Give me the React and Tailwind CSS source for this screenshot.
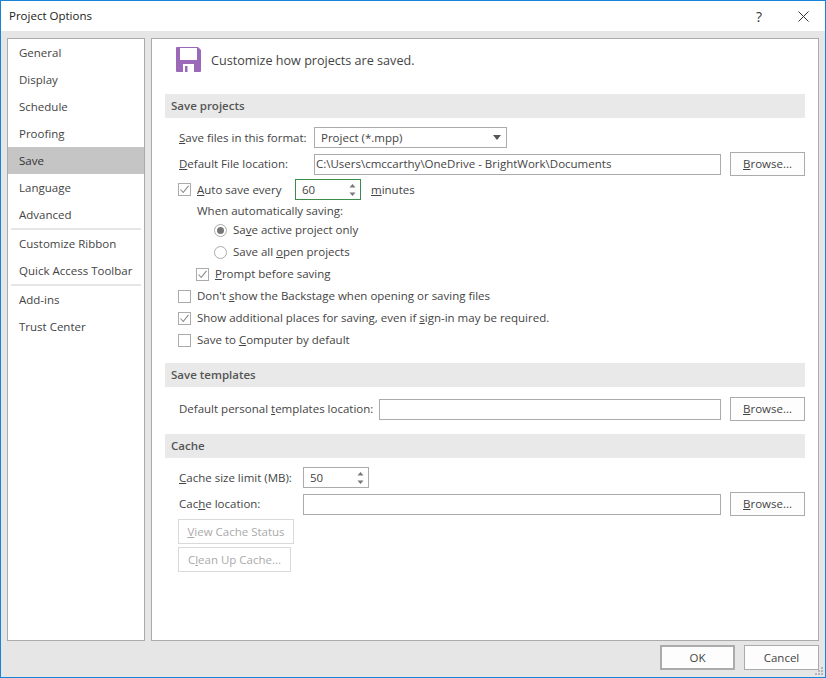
const font = { fontFamily: '"Open Sans", "Noto Sans", sans-serif' }

const navGroups = [
  ['General', 'Display', 'Schedule', 'Proofing', 'Save', 'Language', 'Advanced'],
  ['Customize Ribbon', 'Quick Access Toolbar'],
  ['Add-ins', 'Trust Center'],
]

function Check({ checked }) {
  return (
    <span className="flex h-[13px] w-[13px] shrink-0 items-center justify-center border border-[#ababab] bg-white">
      {checked && (
        <svg width="11" height="11" viewBox="0 0 11 11" fill="none">
          <path d="M1.5 5.5 L4.2 8.5 L9.5 1.8" stroke="#8a8a8a" strokeWidth="1.1" />
        </svg>
      )}
    </span>
  )
}

function Radio({ checked }) {
  return (
    <span className="flex h-[13px] w-[13px] shrink-0 items-center justify-center rounded-full border border-[#ababab] bg-white">
      {checked && <span className="h-[7px] w-[7px] rounded-full bg-[#777777]" />}
    </span>
  )
}

function Spinner({ value, className }) {
  return (
    <div className={`flex h-[21px] items-center justify-between border pl-[6px] pr-[4px] ${className}`}>
      <span>{value}</span>
      <svg width="7" height="14" viewBox="0 0 7 14" fill="#777777">
        <path d="M3.5 1 L6.5 4.5 L0.5 4.5 Z" />
        <path d="M3.5 13 L6.5 9.5 L0.5 9.5 Z" />
      </svg>
    </div>
  )
}

function Browse() {
  return (
    <button className="ml-[9px] h-[24px] w-[75px] shrink-0 border border-[#ababab] bg-[#fdfdfd] text-[#444444]">
      <u>B</u>rowse...
    </button>
  )
}

function SectionHead({ children, className = '' }) {
  return (
    <div className={`flex h-[24px] items-center bg-[#e9e9e9] pb-px pl-[6px] font-semibold text-[#555555] ${className}`}>
      {children}
    </div>
  )
}

function OptionRow({ indent = 'pl-0', children }) {
  return <div className={`flex h-[22px] items-center gap-[6px] ${indent}`}>{children}</div>
}

function FloppyIcon() {
  return (
    <svg width="25" height="25" viewBox="0 0 25 25">
      <path d="M1 0 H22 L25 3 V24 Q25 25 24 25 H1 Q0 25 0 24 V1 Q0 0 1 0 Z" fill="#9b69b7" />
      <rect x="4" y="1" width="17" height="12" fill="#ffffff" />
      <rect x="7" y="17" width="11" height="8" fill="#ffffff" />
      <rect x="9" y="19" width="2.5" height="6" fill="#9b69b7" />
    </svg>
  )
}

export default function App() {
  return (
    <div
      style={font}
      className="flex h-[678px] w-[826px] flex-col border border-[#1883d7] bg-[#e6e6e6] text-[11.5px] text-[#444444]"
    >
      <div className="flex h-[30px] shrink-0 items-center justify-between bg-white pl-[8px]">
        <span className="text-[#222222]">Project Options</span>
        <div className="flex items-center">
          <span className="w-[46px] text-center text-[14px] text-[#333333]">?</span>
          <svg className="mx-[16px]" width="11" height="11" viewBox="0 0 11 11" stroke="#333333" fill="none">
            <path d="M0.5 0.5 L10.5 10.5 M10.5 0.5 L0.5 10.5" />
          </svg>
        </div>
      </div>

      <div className="flex h-[610px] shrink-0 gap-[6px] px-[6px] pt-[7px]">
        <nav className="w-[138px] shrink-0 border border-[#ababab] bg-white">
          {navGroups.map((group, i) => (
            <div key={group[0]} className={i > 0 ? 'mx-[3px] border-t-2 border-[#e6e6e6]' : ''}>
              {group.map((item) => (
                <div
                  key={item}
                  className={`flex h-[27px] items-center pt-px ${i > 0 ? 'pl-[8px]' : 'pl-[11px]'} ${
                    item === 'Save' ? 'bg-[#c5c5c5] text-[#333333]' : ''
                  }`}
                >
                  {item}
                </div>
              ))}
            </div>
          ))}
        </nav>

        <main className="flex-1 border border-[#ababab] bg-white px-[13px]">
          <div className="flex h-[55px] items-start gap-[10px] pl-[11px] pt-[8px]">
            <FloppyIcon />
            <span className="mt-[5px] text-[12.6px]">Customize how projects are saved.</span>
          </div>

          <SectionHead>Save projects</SectionHead>
          <div className="pl-[14px]">
            <div className="mt-[9px] flex h-[21px] items-center">
              <span className="w-[135px] shrink-0 whitespace-nowrap"><u>S</u>ave files in this format:</span>
              <div className="flex h-[21px] w-[193px] items-center justify-between border border-[#ababab] pl-[6px] pr-[5px]">
                <span>Project (*.mpp)</span>
                <svg width="8" height="5" viewBox="0 0 8 5" fill="#555555"><path d="M0 0 H8 L4 5 Z" /></svg>
              </div>
            </div>
            <div className="mt-[4px] flex h-[24px] items-center">
              <span className="w-[135px] shrink-0"><u>D</u>efault File location:</span>
              <div className="flex h-[21px] flex-1 items-center border border-[#ababab] pl-[1px]">
                C:\Users\cmccarthy\OneDrive - BrightWork\Documents
              </div>
              <Browse />
            </div>
            <div className="mt-[3px] flex h-[21px] items-center">
              <span className="-ml-px"><Check checked /></span>
              <span className="ml-[6px] w-[98px]"><u>A</u>uto save every</span>
              <Spinner value="60" className="w-[66px] border-[#3c8c4a]" />
              <span className="ml-[10px]"><u>m</u>inutes</span>
            </div>
            <div className="h-[19px] pl-[18px] pt-[3px] leading-[16px]">When automatically saving:</div>
            <OptionRow indent="pl-[35px]"><Radio checked /><span>Sa<u>v</u>e active project only</span></OptionRow>
            <OptionRow indent="pl-[35px]"><Radio /><span>Save all <u>o</u>pen projects</span></OptionRow>
            <OptionRow indent="pl-[17px]"><Check checked /><span><u>P</u>rompt before saving</span></OptionRow>
            <OptionRow indent="-ml-px"><Check /><span>Don't <u>s</u>how the Backstage when opening or saving files</span></OptionRow>
            <OptionRow indent="-ml-px"><Check checked /><span>Show additional places for saving, even if <u>s</u>ign-in may be required.</span></OptionRow>
            <OptionRow indent="-ml-px"><Check /><span>Save to <u>C</u>omputer by default</span></OptionRow>
          </div>

          <SectionHead className="mt-[12px]">Save templates</SectionHead>
          <div className="mt-[10px] flex h-[24px] items-center pl-[14px]">
            <span className="w-[200px] shrink-0 whitespace-nowrap">Default personal <u>t</u>emplates location:</span>
            <div className="h-[21px] flex-1 border border-[#ababab]" />
            <Browse />
          </div>

          <SectionHead className="mt-[13px]">Cache</SectionHead>
          <div className="pl-[14px]">
            <div className="mt-[9px] flex h-[21px] items-center">
              <span className="w-[124px] shrink-0 whitespace-nowrap"><u>C</u>ache size limit (MB):</span>
              <Spinner value="50" className="w-[66px] border-[#ababab]" />
            </div>
            <div className="mt-[4px] flex h-[24px] items-center">
              <span className="w-[124px] shrink-0">Cac<u>h</u>e location:</span>
              <div className="h-[21px] flex-1 border border-[#ababab]" />
              <Browse />
            </div>
            <button className="mt-[3px] -ml-px block h-[25px] w-[116px] border border-[#d9d9d9] text-[#aaaaaa]">
              <u>V</u>iew Cache Status
            </button>
            <button className="mt-[3px] -ml-px block h-[25px] w-[113px] border border-[#d9d9d9] text-[#aaaaaa]">
              C<u>l</u>ean Up Cache...
            </button>
          </div>
        </main>
      </div>

      <footer className="relative flex flex-1 justify-end gap-[9px] pr-[6px] pt-[4px]">
        <button className="h-[25px] w-[75px] border-2 border-[#ababab] bg-[#fdfdfd]">OK</button>
        <button className="h-[25px] w-[75px] border border-[#ababab] bg-[#fdfdfd]">Cancel</button>
        <svg className="absolute bottom-[1px] right-[1px]" width="9" height="9" viewBox="0 0 9 9" fill="#b5b5b5">
          <rect x="6" y="0" width="2" height="2" />
          <rect x="3" y="3" width="2" height="2" />
          <rect x="6" y="3" width="2" height="2" />
          <rect x="0" y="6" width="2" height="2" />
          <rect x="3" y="6" width="2" height="2" />
          <rect x="6" y="6" width="2" height="2" />
        </svg>
      </footer>
    </div>
  )
}
